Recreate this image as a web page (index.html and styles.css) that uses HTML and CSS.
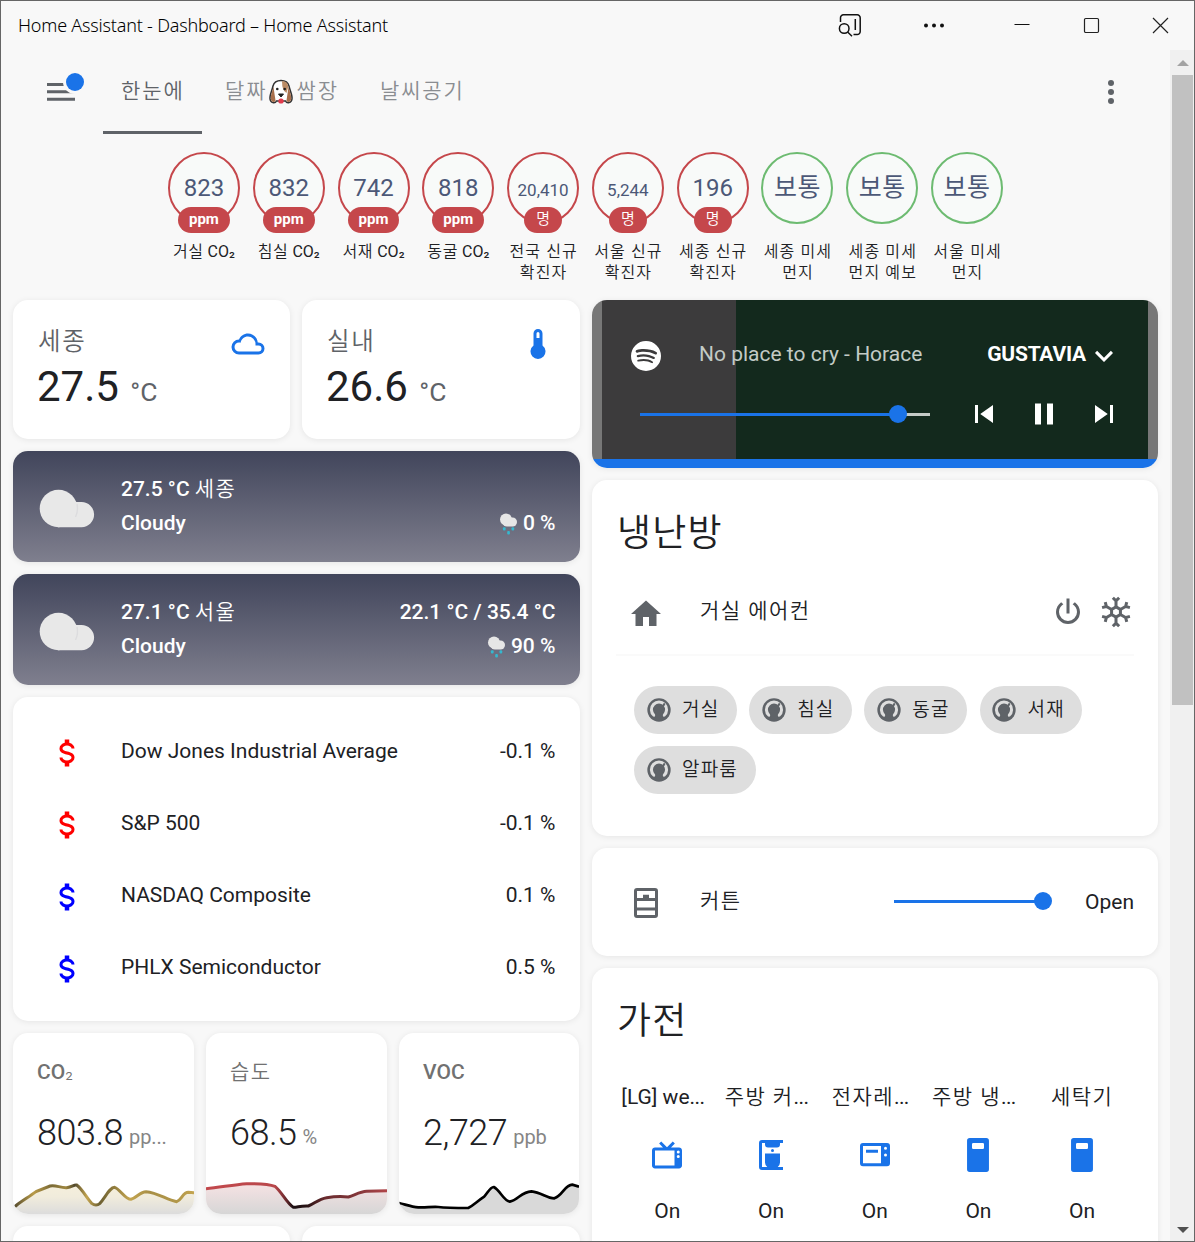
FILE: index.html
```html
<!DOCTYPE html>
<html lang="ko">
<head>
<meta charset="utf-8">
<title>Home Assistant</title>
<link rel="stylesheet" href="styles.css">
</head>
<body>
<svg class="defs" width="0" height="0" aria-hidden="true">
  <defs>
    <symbol id="usd" viewBox="0 0 24 24"><path d="M7,15H9C9,16.08 10.37,17 12,17C13.63,17 15,16.08 15,15C15,13.9 13.96,13.5 11.76,12.97C9.64,12.44 7,11.78 7,9C7,7.21 8.47,5.69 10.5,5.18V3H13.5V5.18C15.53,5.69 17,7.21 17,9H15C15,7.92 13.63,7 12,7C10.37,7 9,7.92 9,9C9,10.1 10.04,10.5 12.24,11.03C14.36,11.56 17,12.22 17,15C17,16.79 15.53,18.31 13.5,18.82V21H10.5V18.82C8.47,18.31 7,16.79 7,15Z"/></symbol>
    <symbol id="gauge" viewBox="0 0 24 24"><circle cx="12" cy="12" r="10"/><path d="M7.600,16.500A6.500,6.500 0 1 1 16.400,16.500" fill="none" stroke="#dedede" stroke-width="2.600" stroke-linecap="round"/><circle cx="12" cy="12.800" r="3.700"/><path d="M12,11.500L16.300,5.800L17.500,6.900L14,13Z"/><path d="M9,14L8.700,19.500H15.300L15,14Z"/></symbol>
    <symbol id="fridge" viewBox="0 0 24 24"><path fill-rule="evenodd" d="M6.5,.7H17.5A1.8,1.8 0 0 1 19.3,2.5V21.5A1.8,1.8 0 0 1 17.5,23.3H6.500A1.8,1.8 0 0 1 4.700,21.500V2.500A1.8,1.8 0 0 1 6.500,.700ZM8.800,4A.8,.8 0 0 0 8,4.800V7.200A.8,.8 0 0 0 8.800,8H15.200A.8,.8 0 0 0 16,7.200V4.800A.8,.8 0 0 0 15.200,4Z"/></symbol>
    <symbol id="cloud" viewBox="0 0 56 40"><circle cx="19.500" cy="19.500" r="18.800"/><path d="M19,13H42.500A12.600,12.600 0 0 1 42.500,38.200H19Z"/><path d="M38,15Q39.500,22 36.500,28" fill="none" stroke="#dcdcde" stroke-width="1.400"/></symbol>
    <symbol id="rain" viewBox="0 0 18 22"><circle cx="6.500" cy="6.500" r="6"/><rect x="3" y="4.500" width="14.500" height="9" rx="4.500"/><g fill="#35b8cf"><rect x="3.400" y="14.200" width="2.700" height="3.400" rx="1"/><rect x="12" y="14.200" width="2.700" height="3.400" rx="1"/><rect x="7.700" y="18" width="2.700" height="3.400" rx="1"/></g></symbol>
  </defs>
</svg>
<div class="window">
  <header class="titlebar">
    <span class="app-title">Home Assistant - Dashboard – Home Assistant</span>
    <div class="window-buttons">
      <svg width="24" height="24" viewBox="0 0 24 24" fill="none" stroke="#111" stroke-width="1.500"><path d="M2.500,9V5A3,3 0 0 1 5.500,1.800H19A3,3 0 0 1 22.200,5V18.500A3,3 0 0 1 19,21.500H15.500M17.300,6V17"/><circle cx="6.200" cy="15.500" r="4.800"/><path d="M9.600,19L14,23.300"/></svg>
      <svg width="24" height="24" viewBox="0 0 24 24" fill="#111"><circle cx="4" cy="12.500" r="2"/><circle cx="12" cy="12.500" r="2"/><circle cx="20" cy="12.500" r="2"/></svg>
      <svg width="24" height="24" viewBox="0 0 24 24" stroke="#111"><path d="M4.500,11.500H19.500"/></svg>
      <svg width="24" height="24" viewBox="0 0 24 24" fill="none" stroke="#222" stroke-width="1.200"><rect x="5.500" y="5.500" width="14" height="14" rx="1.200"/></svg>
      <svg width="24" height="24" viewBox="0 0 24 24" stroke="#222" stroke-width="1.200"><path d="M5,5L20,20M20,5L5,20"/></svg>
    </div>
  </header>
  <div class="viewport">
    <main class="page">
      <nav class="toolbar">
        <svg class="menu" width="40" height="34" viewBox="0 0 40 34"><path d="M1,14.500H29M1,21.800H29M1,29.300H29" stroke="#5f6368" stroke-width="3"/><circle cx="29" cy="12" r="12" fill="#f8f8f8"/><circle cx="29" cy="12" r="9" fill="#1a73e8"/></svg>
        <div class="tabs">
          <a class="tab active">한눈에</a>
          <a class="tab">달짜<svg class="dog" width="26" height="26" viewBox="0 0 26 26"><path d="M13,1.500C18,1.500 20,3 21,7C22,12 24.500,16 24,20C23.500,24 19,25 17.500,22H8.500C7,25 2.500,24 2,20C1.500,16 4,12 5,7C6,3 8,1.500 13,1.500Z" fill="#fff" stroke="#333" stroke-width="1.500"/><path d="M5.500,8Q6.500,15 7.600,22C5.500,24 3,22.500 2.800,20C2.500,16 4.500,12 5.500,8ZM20.500,8Q19.500,15 18.400,22C20.500,24 23,22.500 23.200,20C23.500,16 21.500,12 20.500,8Z" fill="#a86f4b"/><path d="M14,2.300C18,2.300 19.800,4 20.300,7.500L18.500,14Q14,12 14,2.300Z" fill="#bb8c66"/><circle cx="9.300" cy="10" r="1.300" fill="#222"/><circle cx="16.700" cy="10" r="1.300" fill="#222"/><path d="M10.500,15H15.500L13,18Z" fill="#222" stroke="#222" stroke-linejoin="round"/><ellipse cx="13" cy="22" rx="2.700" ry="2.600" fill="#e23b4c"/></svg>쌈장</a>
          <a class="tab">날씨공기</a>
        </div>
        <svg class="dots" width="8" height="26" viewBox="0 0 8 26" fill="#5f6368"><circle cx="4" cy="4" r="3"/><circle cx="4" cy="13" r="3"/><circle cx="4" cy="22" r="3"/></svg>
      </nav>

      <section class="badges">
        <div class="badge"><div class="ring"><span class="value">823</span><span class="unit">ppm</span></div><div class="name"><span class="ko">거실</span> CO<span class="sub">₂</span></div></div>
        <div class="badge"><div class="ring"><span class="value">832</span><span class="unit">ppm</span></div><div class="name"><span class="ko">침실</span> CO<span class="sub">₂</span></div></div>
        <div class="badge"><div class="ring"><span class="value">742</span><span class="unit">ppm</span></div><div class="name"><span class="ko">서재</span> CO<span class="sub">₂</span></div></div>
        <div class="badge"><div class="ring"><span class="value">818</span><span class="unit">ppm</span></div><div class="name"><span class="ko">동굴</span> CO<span class="sub">₂</span></div></div>
        <div class="badge"><div class="ring"><span class="value long">20,410</span><span class="unit single">명</span></div><div class="name ko">전국 신규<br>확진자</div></div>
        <div class="badge"><div class="ring"><span class="value long">5,244</span><span class="unit single">명</span></div><div class="name ko">서울 신규<br>확진자</div></div>
        <div class="badge"><div class="ring"><span class="value">196</span><span class="unit single">명</span></div><div class="name ko">세종 신규<br>확진자</div></div>
        <div class="badge"><div class="ring green"><span class="value grade">보통</span></div><div class="name ko">세종 미세<br>먼지</div></div>
        <div class="badge"><div class="ring green"><span class="value grade">보통</span></div><div class="name ko">세종 미세<br>먼지 예보</div></div>
        <div class="badge"><div class="ring green"><span class="value grade">보통</span></div><div class="name ko">서울 미세<br>먼지</div></div>
      </section>

      <div class="columns">
        <div class="column left">
          <div class="pair">
            <section class="card entity">
              <div class="entity-head"><span class="ko">세종</span><svg class="icon blue" viewBox="0 0 24 24"><path d="M6,19A5,5 0 0,1 1,14A5,5 0 0,1 6,9C7,6.65 9.3,5 12,5C15.43,5 18.24,7.66 18.5,11.03L19,11A4,4 0 0,1 23,15A4,4 0 0,1 19,19H6M19,13H17V12A5,5 0 0,0 12,7C9.5,7 7.45,8.82 7.06,11.19C6.73,11.07 6.37,11 6,11A3,3 0 0,0 3,14A3,3 0 0,0 6,17H19A2,2 0 0,0 21,15A2,2 0 0,0 19,13Z"/></svg></div>
              <div class="entity-state">27.5 <small>°C</small></div>
            </section>
            <section class="card entity">
              <div class="entity-head"><span class="ko">실내</span><svg class="icon blue" viewBox="0 0 24 24"><path d="M15,13V5A3,3 0 0,0 9,5V13A5,5 0 1,0 15,13M12,4A1,1 0 0,1 13,5V8H11V5A1,1 0 0,1 12,4Z"/></svg></div>
              <div class="entity-state">26.6 <small>°C</small></div>
            </section>
          </div>

          <section class="card weather">
            <svg class="cloud"><use href="#cloud"/></svg>
            <div class="weather-text"><div>27.5 °C <span class="ko">세종</span></div><div>Cloudy</div></div>
            <div class="weather-side"><div></div><div><svg class="rain"><use href="#rain"/></svg>0 %</div></div>
          </section>
          <section class="card weather">
            <svg class="cloud"><use href="#cloud"/></svg>
            <div class="weather-text"><div>27.1 °C <span class="ko">서울</span></div><div>Cloudy</div></div>
            <div class="weather-side"><div>22.1 °C / 35.4 °C</div><div><svg class="rain"><use href="#rain"/></svg>90 %</div></div>
          </section>

          <section class="card stocks">
            <div class="stock down"><svg class="icon"><use href="#usd"/></svg><span>Dow Jones Industrial Average</span><span>-0.1 %</span></div>
            <div class="stock down"><svg class="icon"><use href="#usd"/></svg><span>S&amp;P 500</span><span>-0.1 %</span></div>
            <div class="stock up"><svg class="icon"><use href="#usd"/></svg><span>NASDAQ Composite</span><span>0.1 %</span></div>
            <div class="stock up"><svg class="icon"><use href="#usd"/></svg><span>PHLX Semiconductor</span><span>0.5 %</span></div>
          </section>

          <div class="trio">
            <section class="card mini">
              <div class="mini-name">CO<span class="sub">₂</span></div>
              <div class="mini-state">803.8<small>pp...</small></div>
              <svg class="graph" viewBox="39 480 543 102" preserveAspectRatio="none">
                <defs>
                  <linearGradient id="g1" x2="0" y2="1"><stop offset="0" stop-color="#f5efdc"/><stop offset=".4" stop-color="#f1ecdc"/><stop offset="1" stop-color="#dcdcdc"/></linearGradient>
                  <linearGradient id="s1"><stop offset="0" stop-color="#5d5230"/><stop offset=".1" stop-color="#b99b49"/><stop offset=".2" stop-color="#7a6a36"/><stop offset=".28" stop-color="#9f873f"/><stop offset=".33" stop-color="#51492c"/><stop offset=".4" stop-color="#c4a550"/><stop offset=".47" stop-color="#6d6033"/><stop offset=".55" stop-color="#8f7b3c"/><stop offset=".64" stop-color="#c4a550"/><stop offset=".75" stop-color="#a88f46"/><stop offset=".92" stop-color="#b3984a"/><stop offset="1" stop-color="#c4a550"/></linearGradient>
                </defs>
                <path fill="url(#g1)" d="M45,560C62,545 85,532 108,515C125,508 138,503 150,498C168,494 180,504 200,503C218,500 222,493 230,495C250,510 260,535 275,550C284,557 292,557 300,550C317,530 330,502 344,502C360,507 375,538 393,538C410,534 420,515 438,515C475,518 500,540 530,545C545,540 548,517 565,517L582,518V582H39Z"/>
                <path fill="none" stroke="url(#s1)" stroke-width="9" stroke-linecap="round" d="M47,558C62,545 85,532 108,515C125,508 138,503 150,498C168,494 180,504 200,503C218,500 222,493 230,495C250,510 260,535 275,550C284,557 292,557 300,550C317,530 330,502 344,502C360,507 375,538 393,538C410,534 420,515 438,515C475,518 500,540 530,545C545,540 548,517 565,517L582,518"/>
              </svg>
            </section>
            <section class="card mini">
              <div class="mini-name"><span class="ko">습도</span></div>
              <div class="mini-state">68.5<small>%</small></div>
              <svg class="graph" viewBox="618 480 543 102" preserveAspectRatio="none">
                <defs>
                  <linearGradient id="g2" x2="0" y2="1"><stop offset="0" stop-color="#f6e2e3"/><stop offset="1" stop-color="#d6d6d6"/></linearGradient>
                  <linearGradient id="s2"><stop offset="0" stop-color="#c2484c"/><stop offset=".38" stop-color="#b9474b"/><stop offset=".44" stop-color="#6d2a2e"/><stop offset=".48" stop-color="#1c1012"/><stop offset=".56" stop-color="#2a1416"/><stop offset=".66" stop-color="#6b2c2f"/><stop offset=".8" stop-color="#7c3336"/><stop offset=".88" stop-color="#8e3a3e"/><stop offset="1" stop-color="#b04448"/></linearGradient>
                </defs>
                <path fill="url(#g2)" d="M618,506C660,502 700,494 740,491C770,491 805,492 825,499C845,515 860,550 880,562C895,562 898,557 925,558C945,550 955,537 980,533C1000,530 1015,528 1045,531C1065,525 1080,515 1100,514L1161,512V582H618Z"/>
                <path fill="none" stroke="url(#s2)" stroke-width="9" d="M618,506C660,502 700,494 740,491C770,491 805,492 825,499C845,515 860,550 880,562C895,562 898,557 925,558C945,550 955,537 980,533C1000,530 1015,528 1045,531C1065,525 1080,515 1100,514L1161,512"/>
              </svg>
            </section>
            <section class="card mini">
              <div class="mini-name">VOC</div>
              <div class="mini-state">2,727<small>ppb</small></div>
              <svg class="graph" viewBox="57 480 541 102" preserveAspectRatio="none">
                <path fill="#d9d9d9" d="M57,549C75,553 95,561 115,562C140,563 150,560 175,561C200,564 230,564 265,564C282,556 290,545 313,530C325,517 330,502 342,501C360,510 372,543 390,545C415,540 425,515 455,514C485,517 500,534 524,535C550,525 555,495 578,494L598,500V582H57Z"/>
                <path fill="none" stroke="#000" stroke-width="8" d="M57,549C75,553 95,561 115,562C140,563 150,560 175,561C200,564 230,564 265,564C282,556 290,545 313,530C325,517 330,502 342,501C360,510 372,543 390,545C415,540 425,515 455,514C485,517 500,534 524,535C550,525 555,495 578,494L598,500"/>
              </svg>
            </section>
          </div>
          <div class="pair"><section class="card entity"></section><section class="card entity"></section></div>
        </div>

        <div class="column right">
          <section class="card media">
            <div class="media-body">
              <div class="media-top">
                <svg class="icon" viewBox="0 0 24 24"><path d="M17.9,10.9C14.7,9 9.35,8.8 6.3,9.75C5.8,9.9 5.3,9.6 5.15,9.15C5,8.65 5.3,8.15 5.75,8C9.3,6.95 15.15,7.15 18.85,9.35C19.3,9.6 19.45,10.2 19.2,10.65C18.95,11 18.35,11.15 17.9,10.9M17.8,13.7C17.55,14.05 17.1,14.2 16.75,13.95C14.05,12.3 9.95,11.8 6.8,12.8C6.4,12.9 5.95,12.7 5.85,12.3C5.75,11.9 5.95,11.45 6.35,11.35C10,10.25 14.5,10.8 17.6,12.7C17.9,12.85 18.05,13.35 17.8,13.7M16.6,16.45C16.4,16.75 16.05,16.85 15.75,16.65C13.4,15.2 10.45,14.9 6.95,15.7C6.6,15.8 6.3,15.55 6.2,15.25C6.1,14.9 6.35,14.6 6.65,14.5C10.45,13.65 13.75,14 16.35,15.6C16.7,15.75 16.75,16.15 16.6,16.45M12,2A10,10 0 0,0 2,12A10,10 0 0,0 12,22A10,10 0 0,0 22,12A10,10 0 0,0 12,2Z"/></svg>
                <span class="track-name">No place to cry - Horace</span>
                <span class="source">GUSTAVIA</span>
                <svg class="icon" viewBox="0 0 24 24"><path d="M7.41,8.58L12,13.17L16.59,8.58L18,10L12,16L6,10L7.41,8.58Z"/></svg>
              </div>
              <div class="media-controls">
                <div class="slider volume"><i></i></div>
                <svg class="icon" viewBox="0 0 24 24"><path d="M6,18V6H8V18H6M9.500,12L18,6V18L9.500,12Z"/></svg>
                <svg class="icon" viewBox="0 0 24 24"><path d="M14,19H18V5H14M6,19H10V5H6V19Z"/></svg>
                <svg class="icon" viewBox="0 0 24 24"><path d="M16,18H18V6H16M6,18L14.500,12L6,6V18Z"/></svg>
              </div>
            </div>
            <div class="progress"></div>
          </section>

          <section class="card climate">
            <h2>냉난방</h2>
            <div class="climate-row">
              <svg class="icon gray" viewBox="0 0 24 24"><path d="M10,20V14H14V20H19V12H22L12,3L2,12H5V20H10Z"/></svg>
              <span class="ko">거실 에어컨</span>
              <svg class="icon gray" viewBox="0 0 24 24"><path d="M16.56,5.44L15.11,6.89C16.84,7.94 18,9.83 18,12A6,6 0 0,1 12,18A6,6 0 0,1 6,12C6,9.83 7.16,7.94 8.88,6.88L7.44,5.44C5.36,6.88 4,9.28 4,12A8,8 0 0,0 12,20A8,8 0 0,0 20,12C20,9.28 18.64,6.88 16.56,5.44M13,3H11V13H13"/></svg>
              <svg class="icon" viewBox="-12 -12 24 24" fill="none" stroke="#5f6368" stroke-width="2"><path d="M0,-3.400L2.950,-1.700V1.700L0,3.400L-2.950,1.700V-1.700Z"/><g id="arm"><path d="M0,-3.400V-8M-2.100,-9.500L0,-7.400L2.100,-9.500"/></g><use href="#arm" transform="rotate(60)"/><use href="#arm" transform="rotate(120)"/><use href="#arm" transform="rotate(180)"/><use href="#arm" transform="rotate(240)"/><use href="#arm" transform="rotate(300)"/></svg>
            </div>
            <div class="chips">
              <span class="chip"><svg><use href="#gauge"/></svg>거실</span>
              <span class="chip"><svg><use href="#gauge"/></svg>침실</span>
              <span class="chip"><svg><use href="#gauge"/></svg>동굴</span>
              <span class="chip"><svg><use href="#gauge"/></svg>서재</span>
              <span class="chip"><svg><use href="#gauge"/></svg>알파룸</span>
            </div>
          </section>

          <section class="card curtain">
            <svg class="icon" viewBox="0 0 36 36" fill="none" stroke="#5f6368" stroke-width="3"><rect x="7.500" y="4.500" width="21" height="27" rx="1.500"/><path d="M6,14.500H30M6,24H30"/><path d="M15,11.500H21" stroke-width="3.500"/></svg>
            <span class="curtain-name ko">커튼</span>
            <div class="slider position"><i></i></div>
            <span class="curtain-state">Open</span>
          </section>

          <section class="card appliances">
            <h2>가전</h2>
            <div class="glance">
              <div><span class="cut">[LG] we<span class="dotdot">...</span></span><svg class="icon blue" viewBox="0 0 24 24"><path d="M8.160,3L6.750,4.410L9.340,7H4C2.890,7 2,7.890 2,9V19C2,20.110 2.890,21 4,21H20C21.110,21 22,20.110 22,19V9C22,7.890 21.110,7 20,7H14.660L17.250,4.410L15.840,3L12,6.840L8.160,3M4,9H17V19H4V9M19.500,9A1,1 0 0,1 20.500,10A1,1 0 0,1 19.500,11A1,1 0 0,1 18.500,10A1,1 0 0,1 19.500,9M19.500,12A1,1 0 0,1 20.500,13A1,1 0 0,1 19.500,14A1,1 0 0,1 18.500,13A1,1 0 0,1 19.500,12Z"/></svg><span>On</span></div>
              <div><span class="cut"><span class="ko">주방 커</span><span class="dotdot">...</span></span><svg class="icon blue" viewBox="0 0 24 24"><path d="M6,2H20V4H18V5A2,2 0 0 1 16,7H10A2,2 0 0 1 8,5V4H6V20H9.500A4,4 0 0 1 8,17V11H18V17A4,4 0 0 1 16.500,20H20V22H6A2,2 0 0 1 4,20V4A2,2 0 0 1 6,2Z"/><circle cx="13" cy="9" r="1"/></svg><span>On</span></div>
              <div><span class="cut"><span class="ko">전자레</span><span class="dotdot">...</span></span><svg class="icon blue" viewBox="0 0 24 24"><path d="M4,4A2,2 0 0,0 2,6V17.500A2,2 0 0,0 4,19.500H20A2,2 0 0,0 22,17.500V6A2,2 0 0,0 20,4H4M4,6H16V17.500H4V6M19,6.500A1,1 0 0,1 20,7.500A1,1 0 0,1 19,8.500A1,1 0 0,1 18,7.500A1,1 0 0,1 19,6.500M14,8.500V10.500H6V8.500H14M19,11A1,1 0 0,1 20,12A1,1 0 0,1 19,13A1,1 0 0,1 18,12A1,1 0 0,1 19,11Z"/></svg><span>On</span></div>
              <div><span class="cut"><span class="ko">주방 냉</span><span class="dotdot">...</span></span><svg class="icon blue"><use href="#fridge"/></svg><span>On</span></div>
              <div><span><span class="ko">세탁기</span></span><svg class="icon blue"><use href="#fridge"/></svg><span>On</span></div>
            </div>
          </section>
        </div>
      </div>
    </main>
    <aside class="scrollbar"><i class="arrow-up"></i><i class="thumb"></i><i class="arrow-down"></i></aside>
  </div>
</div>
</body>
</html>
```

FILE: styles.css
```css
* { box-sizing: border-box; }
body {
  margin: 0;
  overflow: hidden;
  background: #f8f8f8;
  color: #202124;
  font: 21px/30px Roboto, "Noto Sans CJK KR DemiLight", "Noto Sans CJK KR Light", "Noto Sans CJK KR", sans-serif;
}
svg { display: block; flex: none; }
.defs { position: absolute; }
.ko { font-weight: 300; letter-spacing: .07em; }
.sub { font-weight: 300; line-height: 0; vertical-align: .12em; }
.window {
  display: flex;
  flex-direction: column;
  width: 1195px;
  height: 1242px;
  border: 1px solid #666;
  overflow: hidden;
}
.titlebar {
  flex: none;
  display: flex;
  justify-content: space-between;
  height: 49px;
  padding: 9px 22px 0 17px;
  color: #000;
}
.app-title { font: 300 18px/30px "Noto Sans", sans-serif; letter-spacing: -0.2px; }
.window-buttons { display: flex; padding-top: 3px; }
.window-buttons svg { margin-left: 45px; }
.window-buttons svg:nth-child(2) { margin-left: 60px; }
.window-buttons svg:nth-child(3) { margin-left: 64px; }
.viewport { flex: 1; min-height: 0; display: flex; }
.page { width: 1169px; overflow: hidden; }

.toolbar { display: flex; height: 84px; color: #8a8d91; }
.menu { margin: 20px 0 0 45px; }
.tabs { display: flex; flex: 1; margin-left: 17px; }
.tab {
  display: flex;
  height: 84px;
  padding: 26px 18px 0 18px;
  margin-right: 5px;
  font-weight: 300;
  letter-spacing: 1.9px;
  white-space: nowrap;
}
.tab.active { color: #5f6368; border-bottom: 3px solid #5f6368; width: 99px; }
.dog { margin: 3px 2px 0 1px; }
.dots { margin: 29px 55px 0 0; }

.badges { display: flex; justify-content: center; height: 166px; padding-top: 18px; }
.badge { width: 84.8px; display: flex; flex-direction: column; align-items: center; }
.ring {
  position: relative;
  width: 72px;
  height: 72px;
  border: 2px solid #c5474b;
  border-radius: 50%;
  background: #f8faf9;
  display: flex;
  justify-content: center;
  color: #4c5877;
}
.ring.green { border-color: #6dbb71; }
.value { font-size: 24px; line-height: 68px; }
.value.long { font-size: 17px; line-height: 72px; }
.value.grade { font-family: "Noto Sans CJK KR", sans-serif; font-size: 25px; letter-spacing: .5px; line-height: 63px; }
.unit {
  position: absolute;
  bottom: -11px;
  min-width: 38px;
  height: 26px;
  padding: 0 11px;
  border-radius: 13px;
  background: #c5474b;
  color: #fff;
  font-size: 15px;
  font-weight: 700;
  line-height: 24px;
  text-align: center;
}
.unit.single { font-weight: 400; }
.name { margin-top: 17px; font-size: 16px; font-weight: 400; line-height: 21px; text-align: center; white-space: nowrap; }
.name.ko { padding-left: 1px; font-weight: 400; letter-spacing: .07em; }
.name .ko { font-weight: 400; letter-spacing: .04em; }
.name .sub { font-weight: 400; }

.columns { display: flex; gap: 12px; padding-left: 12px; }
.column { display: flex; flex-direction: column; gap: 12px; }
.left { width: 567px; }
.right { width: 566px; }
.card {
  flex: none;
  background: #fff;
  border-radius: 15px;
  box-shadow: 0 1px 6px rgba(0, 0, 0, .08);
  overflow: hidden;
}
.icon { width: 36px; height: 36px; }
.blue { fill: #1a73e8; }
.gray { fill: #5f6368; }
.pair { display: grid; grid-template-columns: 277px 278px; gap: 12px; }
.entity { height: 139px; padding: 25px 24px 0; }
.entity-head { display: flex; justify-content: space-between; padding-left: 1px; color: #5f6368; font-size: 24.500px; line-height: 33px; }
.entity-head .icon { margin: 1px 0 -7px; }
.entity-state { font-size: 42px; line-height: 50px; margin-top: 4px; }
.entity-state small { margin-left: 1px; font-size: 26.500px; color: #5f6368; }

.weather {
  display: flex;
  height: 111px;
  padding: 21px 24.500px 0 26px;
  background: linear-gradient(#41455b, #7f7f8e);
  color: #fff;
  font-weight: 500;
  line-height: 34px;
}
.cloud { width: 56px; height: 40px; margin: 17px 26px 0 0; fill: #e8e8e8; }
.weather-text { flex: 1; }
.weather-text .ko { font-weight: 400; }
.weather-side div { height: 34px; display: flex; justify-content: flex-end; }
.rain { width: 19px; height: 22px; margin: 7px 5px 0 0; fill: #e6e6e6; }

.stocks { height: 324px; padding: 24px 24.500px 24px 24px; }
.stock { display: flex; justify-content: space-between; height: 60px; margin-bottom: 12px; padding-left: 12px; line-height: 60px; }
.stock .icon { margin: 14px 36px 0 0; }
.stock span:first-of-type { flex: 1; }
.down .icon { fill: #f00; }
.up .icon { fill: #00f; }

.trio { display: grid; grid-template-columns: 181px 181px 180px; gap: 12px; }
.mini { height: 181px; display: flex; flex-direction: column; }
.mini-name { padding: 24px 24px 0; color: #717171; font-weight: 500; }
.mini-state { padding: 25px 24px 0; font-size: 36px; font-weight: 300; letter-spacing: -.5px; line-height: 42px; white-space: nowrap; }
.mini-state small { margin-left: 6px; font-size: 20px; font-weight: 400; letter-spacing: -.1px; line-height: 0; vertical-align: 1px; color: #858585; }
.graph { width: 100%; height: 34px; margin-top: auto; }

.media { height: 168px; color: #fff; fill: #fff; }
.media-body {
  height: 159px;
  padding-top: 36px;
  background: linear-gradient(90deg, #777 0 10px, #3c3b3c 10px 144px, #13291d 144px 556px, #777 556px);
}
.media-top { display: flex; padding: 0 37px 0 36px; line-height: 36px; }
.track-name { flex: 1; margin-left: 35px; color: #c3cbc6; }
.source { font-weight: 700; letter-spacing: -.2px; }
.media-controls { display: flex; gap: 24px; padding: 22px 36px 0 48px; }
.slider { position: relative; height: 3px; background: #c5cbc7; }
.slider i { position: absolute; top: -8px; width: 18px; height: 18px; border-radius: 50%; background: #1a73e8; }
.volume { width: 290px; margin: 17px 12px 0 0; background: linear-gradient(90deg, #1a73e8 258px, #c5cbc7 258px); }
.volume i { left: 249px; }
.media-top .icon:last-child { margin: 2px -1px 0 0; }
.media-top .icon:first-child { margin: 2px 0 -2px; }
.progress { height: 9px; background: #1a73e8; }

h2 { margin: 0; font-size: 37px; font-weight: 300; letter-spacing: 1.200px; line-height: 48px; }
.climate { height: 356px; padding: 30px 24px 0 25px; }
.climate-row { display: flex; height: 80px; margin: 18px 0 0 -1px; padding: 18px 0 0 12px; border-bottom: 2px solid #fafafa; }
.climate-row span { flex: 1; margin: 2px 0 0 36px; }
.climate-row .icon { margin-left: 12px; }
.climate-row .icon:first-child { margin: 2px 0 0; }
.chips { display: flex; flex-wrap: wrap; gap: 12px 12.300px; padding: 30px 15px 0 17px; }
.chip { display: flex; height: 48px; padding: 9px 17.500px 0 10.500px; border-radius: 24px; background: #dedede; font-size: 19px; font-weight: 300; letter-spacing: 1.200px; }
.chip svg { width: 28px; height: 28px; margin: 1px 9.500px 0 0; fill: #5f6368; }

.curtain { display: flex; align-items: center; height: 108px; padding: 0 24px 0 36px; }
.curtain .icon { margin-top: 2px; }
.curtain-name { flex: 1; margin: -3px 0 0 36px; }
.position { width: 149px; margin-top: -1px; background: #1a73e8; }
.position i { right: -9px; }
.curtain-state { margin-left: 42px; }

.appliances { height: 300px; padding: 30px 23px 0 25px; }
.glance { display: grid; grid-template-columns: repeat(5, 103.7px); margin: 36px 0 0 -1.500px; }
.glance div { display: flex; flex-direction: column; align-items: center; }
.glance span { white-space: nowrap; }
.glance .cut { margin-left: -9px; }
.dotdot { letter-spacing: -.6px; }
.glance .icon { margin: 25px 0 23px; }

.scrollbar { display: flex; flex-direction: column; width: 24px; padding: 10px 1px 8px 2px; background: #f0f0f0; align-items: center; }
.arrow-up { border: 6px solid transparent; border-top: 0; border-bottom-color: #a3a3a3; }
.thumb { width: 21px; height: 630px; margin-top: 9px; background: #c1c1c1; }
.arrow-down { margin-top: auto; border: 6px solid transparent; border-bottom: 0; border-top-color: #505050; }
```
